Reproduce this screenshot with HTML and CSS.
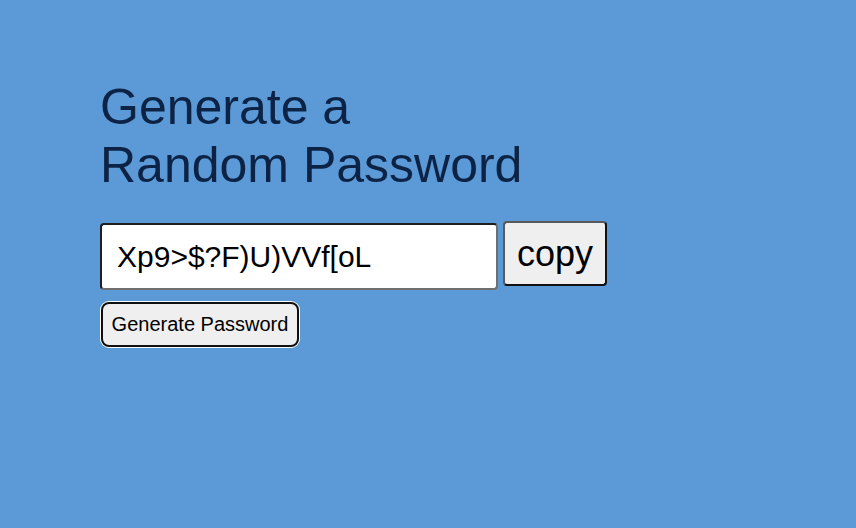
FILE: index.html
```html
<!DOCTYPE html>
<html lang="en">
<head>
<meta charset="utf-8">
<title>Random Password Generator</title>
<link rel="stylesheet" href="styles.css">
</head>
<body>
<main class="wrap">
  <h1 class="title">Generate a<br>Random Password</h1>
  <div class="row">
    <input class="pw" type="text" value="Xp9&gt;$?F)U)VVf[oL" readonly>
    <button class="copy" type="button">copy</button>
  </div>
  <button class="gen" type="button">Generate Password</button>
</main>
</body>
</html>
```

FILE: styles.css
```css
html, body {
  margin: 0;
  padding: 0;
  height: 100%;
}
body {
  background: #5b9ad6;
  font-family: "Liberation Sans", Arial, sans-serif;
}
.wrap {
  padding: 78px 0 0 100px;
}
.title {
  margin: 0;
  font-size: 50px;
  line-height: 58px;
  font-weight: 400;
  color: #0c2345;
}
.row {
  display: flex;
  align-items: flex-start;
  gap: 5px;
  margin-top: 27px;
}
.pw {
  box-sizing: border-box;
  width: 398px;
  height: 67px;
  margin: 2px 0 0 0;
  padding: 0 0 0 15px;
  font-family: "Liberation Sans", Arial, sans-serif;
  font-size: 30px;
  color: #000;
  background: #fff;
  border: 2px solid;
  border-color: #1e1e1e #6f6f6f #6f6f6f #1e1e1e;
  border-radius: 4px;
  outline: none;
}
.copy {
  box-sizing: border-box;
  width: 104px;
  height: 65px;
  margin: 0;
  padding: 0;
  font-family: "Liberation Sans", Arial, sans-serif;
  font-size: 36px;
  color: #000;
  background: #efefef;
  border: 2px solid;
  border-color: #5a5a5a #111 #111 #5a5a5a;
  border-radius: 4px;
}
.gen {
  box-sizing: border-box;
  display: block;
  width: 198px;
  height: 45px;
  margin: 12px 0 0 1px;
  padding: 0;
  font-family: "Liberation Sans", Arial, sans-serif;
  font-size: 20px;
  color: #000;
  background: #efefef;
  border: 2px solid #101010;
  border-radius: 8px;
  box-shadow: 0 0 0 1px #fff;
}
```
